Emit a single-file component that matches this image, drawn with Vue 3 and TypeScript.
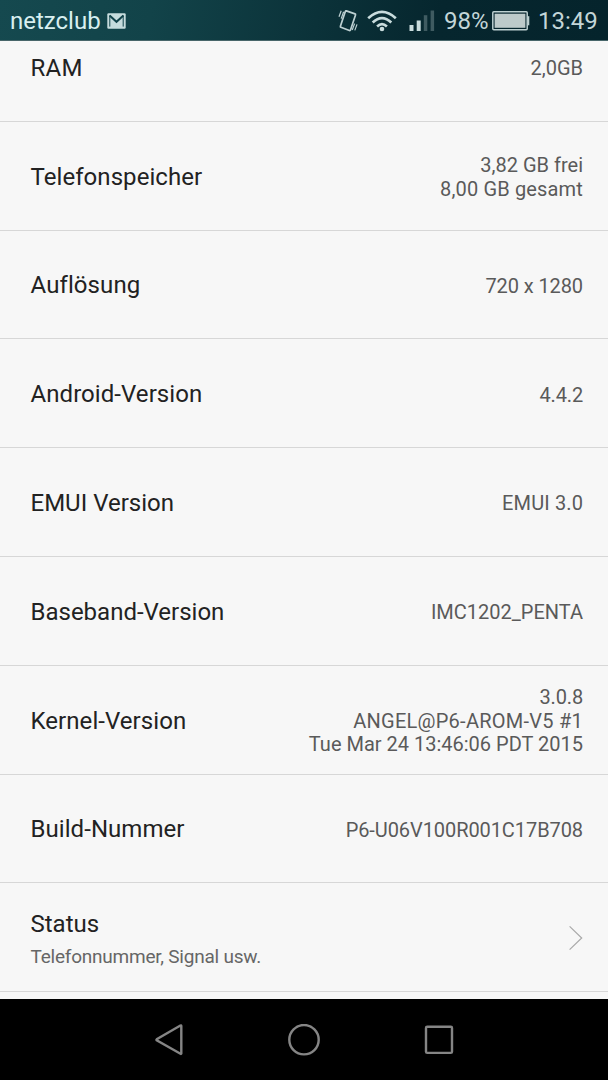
<script setup lang="ts">
interface InfoValue {
  text: string
  tracking?: number
}

interface InfoRow {
  label: string
  tracking?: number
  values: InfoValue[]
}

const rows: InfoRow[] = [
  { label: 'RAM', tracking: 0.3, values: [{ text: '2,0GB' }] },
  {
    label: 'Telefonspeicher',
    tracking: 0.06,
    values: [{ text: '3,82 GB frei' }, { text: '8,00 GB gesamt', tracking: 0.15 }],
  },
  { label: 'Auflösung', tracking: 0.1, values: [{ text: '720 x 1280', tracking: -0.1 }] },
  { label: 'Android-Version', tracking: 0.06, values: [{ text: '4.4.2', tracking: -0.15 }] },
  { label: 'EMUI Version', values: [{ text: 'EMUI 3.0', tracking: 0.12 }] },
  { label: 'Baseband-Version', values: [{ text: 'IMC1202_PENTA' }] },
  {
    label: 'Kernel-Version',
    tracking: 0.06,
    values: [
      { text: '3.0.8', tracking: -0.15 },
      { text: 'ANGEL@P6-AROM-V5 #1', tracking: 0.25 },
      { text: 'Tue Mar 24 13:46:06 PDT 2015' },
    ],
  },
  { label: 'Build-Nummer', tracking: 0.06, values: [{ text: 'P6-U06V100R001C17B708', tracking: -0.08 }] },
]

const spacing = (tracking = 0) => ({ letterSpacing: `${tracking}px` })
</script>

<template>
  <div class="phone">
    <header class="status-bar">
      <span class="carrier">netzclub</span>
      <svg class="mail" width="19" height="16" viewBox="0 0 19 16">
        <rect x="0.3" y="0.3" width="18.4" height="15.4" rx="1.2" fill="#c6dcdd" />
        <path d="M2.6 2.6L9.5 8.8L16.4 2.6" fill="none" stroke="#12434a" stroke-width="2" />
        <path d="M2.8 2.4V13.6M16.2 2.4V13.6" fill="none" stroke="#12434a" stroke-width="1" />
      </svg>
      <span class="spacer"></span>
      <svg class="vibrate" width="20" height="24" viewBox="0 0 20 24" fill="none" stroke="#bdd0d2">
        <path d="M8.3 1.9L17 4.9Q17.8 5.2 17.5 6L12.5 21Q12.2 21.8 11.4 21.5L2.9 18.3Q2.1 18 2.4 17.2L7.3 2.5Q7.6 1.7 8.3 1.9Z" stroke-width="1.7" />
        <path d="M1 7.8L3.2 1.8M3.2 9.6L5.6 2.8M14.2 21L16.6 14.6M16.8 21.4L19 15.4" stroke-width="1.2" />
      </svg>
      <svg class="wifi" width="30" height="22" viewBox="0 0 30 22" fill="none" stroke="#c9dcdd" stroke-width="2.7">
        <path d="M1.2 8.2Q15 -4.6 28.8 8.2" />
        <path d="M5.7 12.5Q15 3.7 24.3 12.5" />
        <path d="M10.1 16.4Q15 12 19.9 16.4" />
        <circle cx="15" cy="19" r="2.3" fill="#c9dcdd" stroke="none" />
      </svg>
      <svg class="signal" width="26" height="22" viewBox="0 0 26 22">
        <rect x="0.5" y="15" width="4" height="6" fill="#c9dcdd" />
        <rect x="7.7" y="10.5" width="4" height="10.5" fill="#c9dcdd" />
        <rect x="14.8" y="5.2" width="3.5" height="15.8" fill="#3f5b61" />
        <rect x="21.6" y="0.5" width="3.5" height="20.5" fill="#3f5b61" />
      </svg>
      <span class="percent">98%</span>
      <svg class="battery" width="38" height="20" viewBox="0 0 38 20">
        <rect x="0.8" y="0.8" width="34.4" height="17.9" rx="1" fill="none" stroke="#bdd0d1" stroke-width="1.5" />
        <rect x="2.6" y="2.7" width="30.8" height="14.1" fill="#bdcaca" />
        <path d="M35.5 5.2H37.3V14.3H35.5Z" fill="#bdd0d1" />
      </svg>
      <span class="clock">13:49</span>
    </header>

    <main class="content">
      <section v-for="row in rows" :key="row.label" class="row">
        <span class="label" :style="spacing(row.tracking)">{{ row.label }}</span>
        <span class="values">
          <span
            v-for="value in row.values"
            :key="value.text"
            class="value"
            :style="spacing(value.tracking)"
          >{{ value.text }}</span>
        </span>
      </section>
      <section class="row">
        <div class="stack">
          <span class="label">Status</span>
          <span class="summary">Telefonnummer, Signal usw.</span>
        </div>
        <svg class="chevron" width="15" height="26" viewBox="0 0 15 26">
          <path d="M1.6 1.4L13.7 13L1.6 24.6" fill="none" stroke="#a9a9a9" stroke-width="1.2" />
        </svg>
      </section>
    </main>

    <nav class="nav-bar">
      <svg width="32" height="32" viewBox="0 0 32 32">
        <path d="M28.3 1.8V29.6Q28.2 30.2 27.5 29.8L3.7 16.4Q3.1 15.8 3.7 15.3L27.4 1.5Q28.2 1.1 28.3 1.8Z" />
      </svg>
      <svg width="32" height="32" viewBox="0 0 32 32">
        <circle cx="16" cy="15.7" r="14.7" />
      </svg>
      <svg width="32" height="32" viewBox="0 0 32 32">
        <rect x="3" y="2.7" width="26" height="26.2" rx="1.2" />
      </svg>
    </nav>
  </div>
</template>

<style>
body {
  margin: 0;
  background: #000;
}
</style>

<style scoped>
.phone {
  display: flex;
  flex-direction: column;
  width: 608px;
  height: 1080px;
  overflow: hidden;
  background: #000;
  font-family: Roboto, "Noto Sans", sans-serif;
  font-variant-ligatures: none;
}

.status-bar {
  display: flex;
  flex: none;
  align-items: center;
  box-sizing: border-box;
  height: 41px;
  padding: 1px 11px 0 10px;
  border-bottom: 1px solid #48666a;
  background: linear-gradient(100deg, #15494f 0%, #124349 25%, #0b3239 52%, #06262e 72%, #05242c 100%);
  color: #c3d6d8;
  font-size: 24px;
  line-height: 40px;
  white-space: nowrap;
}

.carrier {
  width: 91px;
  color: #d8eff0;
}

.mail {
  margin-left: 6px;
}

.spacer {
  flex: 1;
}

.wifi {
  margin-left: 9px;
}

.signal {
  margin-left: 12px;
}

.percent {
  width: 44px;
  margin-left: 9px;
}

.battery {
  margin-left: 4px;
}

.clock {
  width: 59px;
  margin-left: 8px;
}

.content {
  flex: none;
  height: 958px;
  overflow: hidden;
  background: #f7f7f7;
}

.row {
  display: flex;
  align-items: center;
  justify-content: space-between;
  box-sizing: border-box;
  height: 108.8px;
  padding: 2px 25px 0 30.5px;
  border-bottom: 1px solid #d7d7d7;
}

.row:first-child {
  margin-top: -28px;
}

.label {
  color: #222;
  font-size: 24px;
  line-height: 28px;
  white-space: nowrap;
}

.values {
  display: flex;
  flex-direction: column;
  align-items: flex-end;
  padding-top: 2px;
}

.value {
  color: #5a5a5a;
  font-size: 20px;
  line-height: 23.5px;
  white-space: nowrap;
}

.stack {
  display: flex;
  flex-direction: column;
  gap: 7px;
  padding-top: 2px;
}

.summary {
  color: #666;
  font-size: 19px;
  letter-spacing: -0.23px;
  line-height: 24px;
}

.nav-bar {
  display: flex;
  flex: 1;
  align-items: center;
  justify-content: center;
  gap: 103px;
  background: #000;
}

.nav-bar svg {
  fill: none;
  stroke: #858585;
  stroke-width: 2.4;
}
</style>
